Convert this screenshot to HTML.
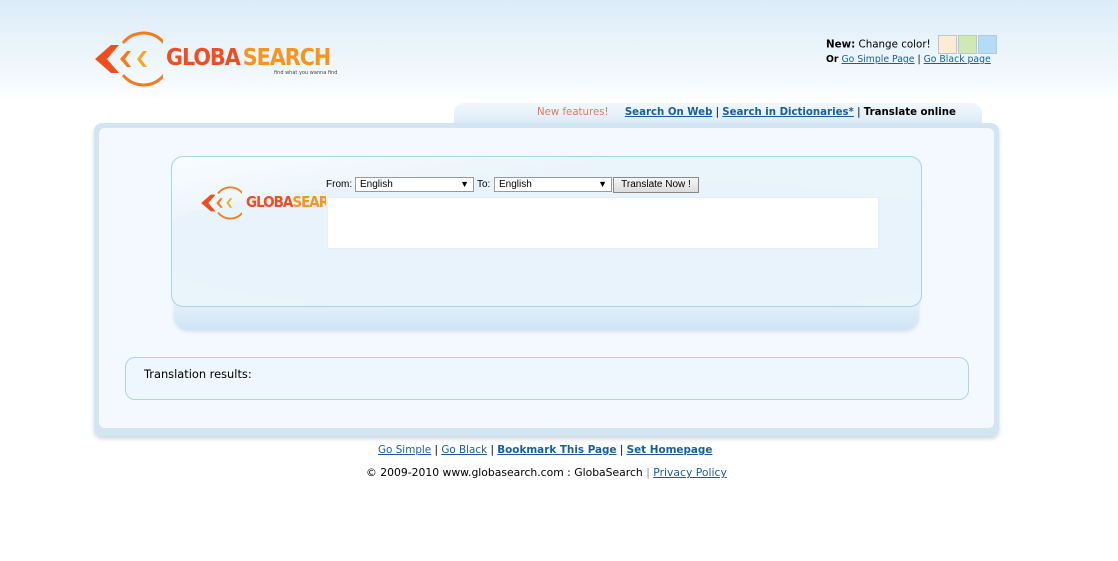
<!DOCTYPE html>
<html><head><meta charset="utf-8"><style>
*{margin:0;padding:0;box-sizing:border-box}
body{width:1118px;height:561px;position:relative;overflow:hidden;background:#fff;font-family:"DejaVu Sans",Verdana,sans-serif;font-size:11px;color:#000}
.a{position:absolute}
a{color:#1a5e97;text-decoration:underline}
.top{left:0;top:0;width:1118px;height:100px;background:linear-gradient(#dcecf8,#f4f9fd 80%,#fff)}
.logo-t{font-family:"DejaVu Sans Condensed","Liberation Sans Narrow",sans-serif;font-weight:bold;letter-spacing:-1px;white-space:nowrap}
.sw{width:19px;height:19px;border:1px solid #b8c8d4;display:inline-block;vertical-align:middle}
.select{position:absolute;height:15px;border:1px solid #999;background:#fff;font-size:10px;padding-left:4px;line-height:13px;font-family:"Liberation Sans",Arial,sans-serif}
.select b{position:absolute;right:4px;top:0;font-size:9px}
</style></head><body>
<div class="a top"></div>

<svg class="a" style="left:93px;top:31px" width="70" height="56" viewBox="0 0 70 56">
<path d="M2 28 L18 14 L26 14 L14 28 L26 42 L18 42 Z" fill="#f04e1f"/>
<path d="M27 28 L34 20 L38 20 L32 28 L38 36 L34 36 Z" fill="#f47b20"/>
<path d="M44 28 L50 20 L54 20 L48 28 L54 36 L50 36 Z" fill="#f7a81d"/>
<path d="M30 12 A26 26 0 1 1 30 44" fill="none" stroke="#f47b20" stroke-width="3"/>
</svg>
<div class="a logo-t" style="left:166px;top:45px;font-size:23px;line-height:26px"><span style="color:#ef4e23">GLOBA</span><span style="color:#f7941d;margin-left:3px">SEARCH</span></div>
<div class="a" style="left:274px;top:70px;font-size:5px;color:#444">find what you wanna find</div>

<div class="a" style="left:826px;top:35px;white-space:nowrap;font-size:10.3px"><b>New:</b> Change color! <span class="sw" style="background:#fdebd2;margin-left:4px"></span><span class="sw" style="background:#cfe8b5;margin-left:1px"></span><span class="sw" style="background:#b5dcf7;margin-left:1px"></span></div>
<div class="a" style="left:826px;top:54px;font-size:9.3px;white-space:nowrap"><b>Or</b> <a>Go Simple Page</a> | <a>Go Black page</a></div>

<div class="a" style="left:454px;top:103px;width:528px;height:26px;border-radius:10px 10px 0 0;background:linear-gradient(#f2f8fd,#d6e8f5)"></div>
<div class="a" style="left:537px;top:107px;white-space:nowrap;font-size:10.2px"><span style="color:#e07a5f">New features!</span>&nbsp;&nbsp;&nbsp;&nbsp;&nbsp;<a style="font-weight:bold">Search On Web</a> | <a style="font-weight:bold">Search in Dictionaries*</a> | <b>Translate online</b></div>

<div class="a" style="left:94px;top:123px;width:905px;height:313px;border-radius:8px;background:#d1e5f3;box-shadow:0 3px 4px rgba(120,150,170,.35)"></div>
<div class="a" style="left:99px;top:128px;width:895px;height:300px;border-radius:6px;background:#f3f9fe"></div>

<div class="a" style="left:174px;top:290px;width:745px;height:40px;border-radius:0 0 14px 14px;background:linear-gradient(#eef6fc,#cfe5f5);box-shadow:0 2px 3px rgba(150,180,200,.3)"></div>
<div class="a" style="left:171px;top:156px;width:751px;height:151px;border:1px solid #a9d3e6;border-radius:12px;background:linear-gradient(170deg,#f8fcff 0%,#eaf4fb 30%,#eaf4fb 100%);overflow:hidden">
<div class="a" style="left:-40px;top:20px;width:900px;height:140px;border-radius:50%;background:#e8f3fb"></div>
</div>
<svg class="a" style="left:200px;top:185px" width="42" height="36" viewBox="0 0 70 56">
<path d="M2 28 L18 14 L26 14 L14 28 L26 42 L18 42 Z" fill="#f04e1f"/>
<path d="M27 28 L34 20 L38 20 L32 28 L38 36 L34 36 Z" fill="#f47b20"/>
<path d="M44 28 L50 20 L54 20 L48 28 L54 36 L50 36 Z" fill="#f7a81d"/>
<path d="M30 12 A26 26 0 1 1 30 44" fill="none" stroke="#f47b20" stroke-width="3"/>
</svg>
<div class="a" style="left:246px;top:193px;width:80px;overflow:hidden"><div class="logo-t" style="font-size:15px;line-height:18px"><span style="color:#ef4e23">GLOBA</span><span style="color:#f7941d">SEARCH</span></div></div>

<div class="a" style="left:326px;top:179px;font-size:10px;font-family:'Liberation Sans',Arial,sans-serif">From:</div>
<div class="select" style="left:355px;top:177px;width:119px">English<b>▼</b></div>
<div class="a" style="left:477px;top:179px;font-size:10px;font-family:'Liberation Sans',Arial,sans-serif">To:</div>
<div class="select" style="left:494px;top:177px;width:118px">English<b>▼</b></div>
<div class="a" style="left:613px;top:177px;width:86px;height:16px;border:1px solid #888;background:linear-gradient(#f6f6f6,#dcdcdc);font-size:10px;text-align:center;line-height:14px;font-family:'Liberation Sans',Arial,sans-serif">Translate Now !</div>
<div class="a" style="left:327px;top:197px;width:552px;height:52px;background:#fff;border:1px solid #e3eef6"></div>

<div class="a" style="left:125px;top:357px;width:844px;height:43px;border:1px solid #a8d5ea;border-radius:10px;background:#eef7fd"></div>
<div class="a" style="left:144px;top:367px;font-size:11.4px">Translation results:</div>

<div class="a" style="left:378px;top:444px;white-space:nowrap;font-size:10.4px"><a>Go Simple</a> | <a>Go Black</a> | <a style="font-weight:bold">Bookmark This Page</a> | <a style="font-weight:bold">Set Homepage</a></div>
<div class="a" style="left:366px;top:466px;white-space:nowrap;font-size:10.8px">© 2009-2010 www.globasearch.com : GlobaSearch <span style="color:#888">|</span> <a>Privacy Policy</a></div>
</body></html>
